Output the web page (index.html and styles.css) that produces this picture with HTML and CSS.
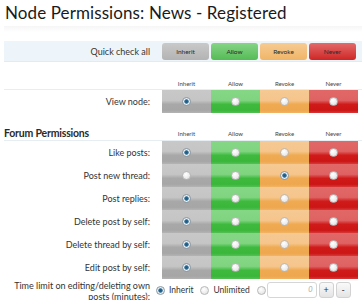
FILE: index.html
```html
<!DOCTYPE html>
<html>
<head>
  <meta charset="UTF-8">
  <title>Node Permissions</title>
  <link rel="stylesheet" href="styles.css">
</head>
<body>
  <h1 class="title">Node Permissions: News - Registered</h1>
  <div class="title-shade"></div>

  <!-- Quick check all -->
  <div class="quick-row">
    <span class="label">Quick check all</span>
    <span class="qbtn inherit">Inherit</span>
    <span class="qbtn allow">Allow</span>
    <span class="qbtn revoke">Revoke</span>
    <span class="qbtn never">Never</span>
  </div>

  <!-- General -->
  <div class="head-row">
    <span class="label"></span>
    <span class="col-h">Inherit</span>
    <span class="col-h">Allow</span>
    <span class="col-h">Revoke</span>
    <span class="col-h">Never</span>
  </div>
  <div class="perm-row">
    <span class="label">View node:</span>
    <span class="cell inherit"><i class="radio on"></i></span>
    <span class="cell allow"><i class="radio"></i></span>
    <span class="cell revoke"><i class="radio"></i></span>
    <span class="cell never"><i class="radio"></i></span>
  </div>

  <!-- Forum Permissions -->
  <div class="head-row section">
    <span class="label">Forum Permissions</span>
    <span class="col-h">Inherit</span>
    <span class="col-h">Allow</span>
    <span class="col-h">Revoke</span>
    <span class="col-h">Never</span>
  </div>
  <div class="perm-row">
    <span class="label">Like posts:</span>
    <span class="cell inherit"><i class="radio on"></i></span>
    <span class="cell allow"><i class="radio"></i></span>
    <span class="cell revoke"><i class="radio"></i></span>
    <span class="cell never"><i class="radio"></i></span>
  </div>
  <div class="perm-row">
    <span class="label">Post new thread:</span>
    <span class="cell inherit"><i class="radio"></i></span>
    <span class="cell allow"><i class="radio"></i></span>
    <span class="cell revoke"><i class="radio on"></i></span>
    <span class="cell never"><i class="radio"></i></span>
  </div>
  <div class="perm-row">
    <span class="label">Post replies:</span>
    <span class="cell inherit"><i class="radio on"></i></span>
    <span class="cell allow"><i class="radio"></i></span>
    <span class="cell revoke"><i class="radio"></i></span>
    <span class="cell never"><i class="radio"></i></span>
  </div>
  <div class="perm-row">
    <span class="label">Delete post by self:</span>
    <span class="cell inherit"><i class="radio on"></i></span>
    <span class="cell allow"><i class="radio"></i></span>
    <span class="cell revoke"><i class="radio"></i></span>
    <span class="cell never"><i class="radio"></i></span>
  </div>
  <div class="perm-row">
    <span class="label">Delete thread by self:</span>
    <span class="cell inherit"><i class="radio on"></i></span>
    <span class="cell allow"><i class="radio"></i></span>
    <span class="cell revoke"><i class="radio"></i></span>
    <span class="cell never"><i class="radio"></i></span>
  </div>
  <div class="perm-row">
    <span class="label">Edit post by self:</span>
    <span class="cell inherit"><i class="radio on"></i></span>
    <span class="cell allow"><i class="radio"></i></span>
    <span class="cell revoke"><i class="radio"></i></span>
    <span class="cell never"><i class="radio"></i></span>
  </div>

  <!-- Time limit -->
  <div class="time-row">
    <span class="label">Time limit on editing/deleting own posts (minutes):</span>
    <div class="time-opts">
      <i class="radio on"></i><span class="opt">Inherit</span>
      <i class="radio"></i><span class="opt">Unlimited</span>
      <i class="radio"></i>
      <span class="num-box">0</span>
      <span class="spin">+</span>
      <span class="spin">-</span>
    </div>
  </div>
</body>
</html>
```

FILE: styles.css
```css
/* Page */
body {
  margin: 0;
  padding: 0 0 0 4px;
  background: #fff;
  font-family: Lato, "Liberation Sans", sans-serif;
  color: #222;
  overflow: hidden;
}
.title {
  margin: 0;
  padding: 2px 0 0 1px;
  font-size: 17px;
  font-weight: normal;
  letter-spacing: 0.1px;
  line-height: 22px;
  color: #1a1a1a;
  white-space: nowrap;
}
.title-shade {
  height: 6px;
  margin-top: 2px;
  background: linear-gradient(to bottom, #f6f6f6, #fff);
}

/* Shared label column */
.label {
  width: 146px;
  padding-right: 12px;
  text-align: right;
  font-size: 9px;
  color: #333;
  flex: none;
}

/* Quick check row */
.quick-row {
  display: flex;
  align-items: center;
  height: 20px;
  margin-top: 9px;
  background: #eef5fa;
  border-bottom: 1px solid #e2ebf2;
}
.qbtn {
  width: 47px;
  height: 17px;
  margin-right: 2px;
  border-radius: 3px;
  font-size: 6.5px;
  line-height: 17px;
  text-align: center;
  color: #2a2a2a;
}
.qbtn.inherit { background: linear-gradient(#c9c9c9, #b3b3b3); }
.qbtn.allow { background: linear-gradient(#86d586, #55bb55); }
.qbtn.revoke { background: linear-gradient(#f6cb92, #f0b567); }
.qbtn.never { background: linear-gradient(#e36a6a, #cf2626); }

/* Column headers */
.head-row {
  display: flex;
  align-items: center;
  height: 12px;
  margin-top: 15px;
  border-bottom: 1px solid #e6edf3;
}
.head-row.section {
  margin-top: 13px;
  height: 14px;
}
.head-row.section .label {
  text-align: left;
  font-size: 10.5px;
  font-weight: bold;
  color: #2a2a2a;
  letter-spacing: -0.2px;
}
.col-h {
  width: 49px;
  text-align: center;
  font-size: 6px;
  color: #444;
}

/* Permission rows */
.perm-row {
  display: flex;
  align-items: center;
  height: 23px;
}
.cell {
  width: 49px;
  height: 23px;
  display: flex;
  align-items: center;
  justify-content: center;
}
.cell.inherit { background: linear-gradient(#c8c8c8 0%, #c5c5c5 45%, #a8a8a8 62%, #a6a6a6 88%, #b4b4b4 100%); }
.cell.allow { background: linear-gradient(#85d785 0%, #80d480 45%, #3fba3f 62%, #3ab63a 88%, #55c055 100%); }
.cell.revoke { background: linear-gradient(#f6c993 0%, #f5c58c 45%, #efaa52 62%, #eea74e 88%, #f1b466 100%); }
.cell.never { background: linear-gradient(#e16868 0%, #df6262 45%, #d01b1b 62%, #cc1515 88%, #d63a3a 100%); }

/* Radio buttons */
.radio {
  display: inline-block;
  width: 7px;
  height: 7px;
  border-radius: 50%;
  border: 1px solid #b8b8b8;
  background: radial-gradient(circle at 40% 35%, #ffffff, #dedede);
  flex: none;
}
.radio.on {
  border-color: #8c99a3;
  background: radial-gradient(circle, #1c5a84 0, #2a6a94 1.8px, #eef3f6 2.6px, #d3dbe0 100%);
}

/* Time limit row */
.time-row {
  display: flex;
  align-items: center;
  height: 22px;
}
.time-row .label {
  line-height: 11px;
  margin-top: 1px;
}
.time-opts {
  display: flex;
  align-items: center;
  margin-left: -6px;
  font-size: 8.5px;
  color: #333;
}
.time-opts .opt {
  margin: 0 7px 0 4px;
}
.num-box {
  width: 45px;
  height: 14px;
  margin-left: 1px;
  padding-right: 3px;
  border: 1px solid #d6d6d6;
  border-radius: 3px;
  text-align: right;
  font-style: italic;
  font-size: 7.5px;
  line-height: 14px;
  color: #aaa;
}
.spin {
  width: 13px;
  height: 14px;
  margin-left: 2px;
  border: 1px solid #d2d2d2;
  border-radius: 3px;
  background: linear-gradient(#fafafa, #e4e4e4);
  text-align: center;
  font-size: 9px;
  line-height: 13px;
  color: #333;
}
```
